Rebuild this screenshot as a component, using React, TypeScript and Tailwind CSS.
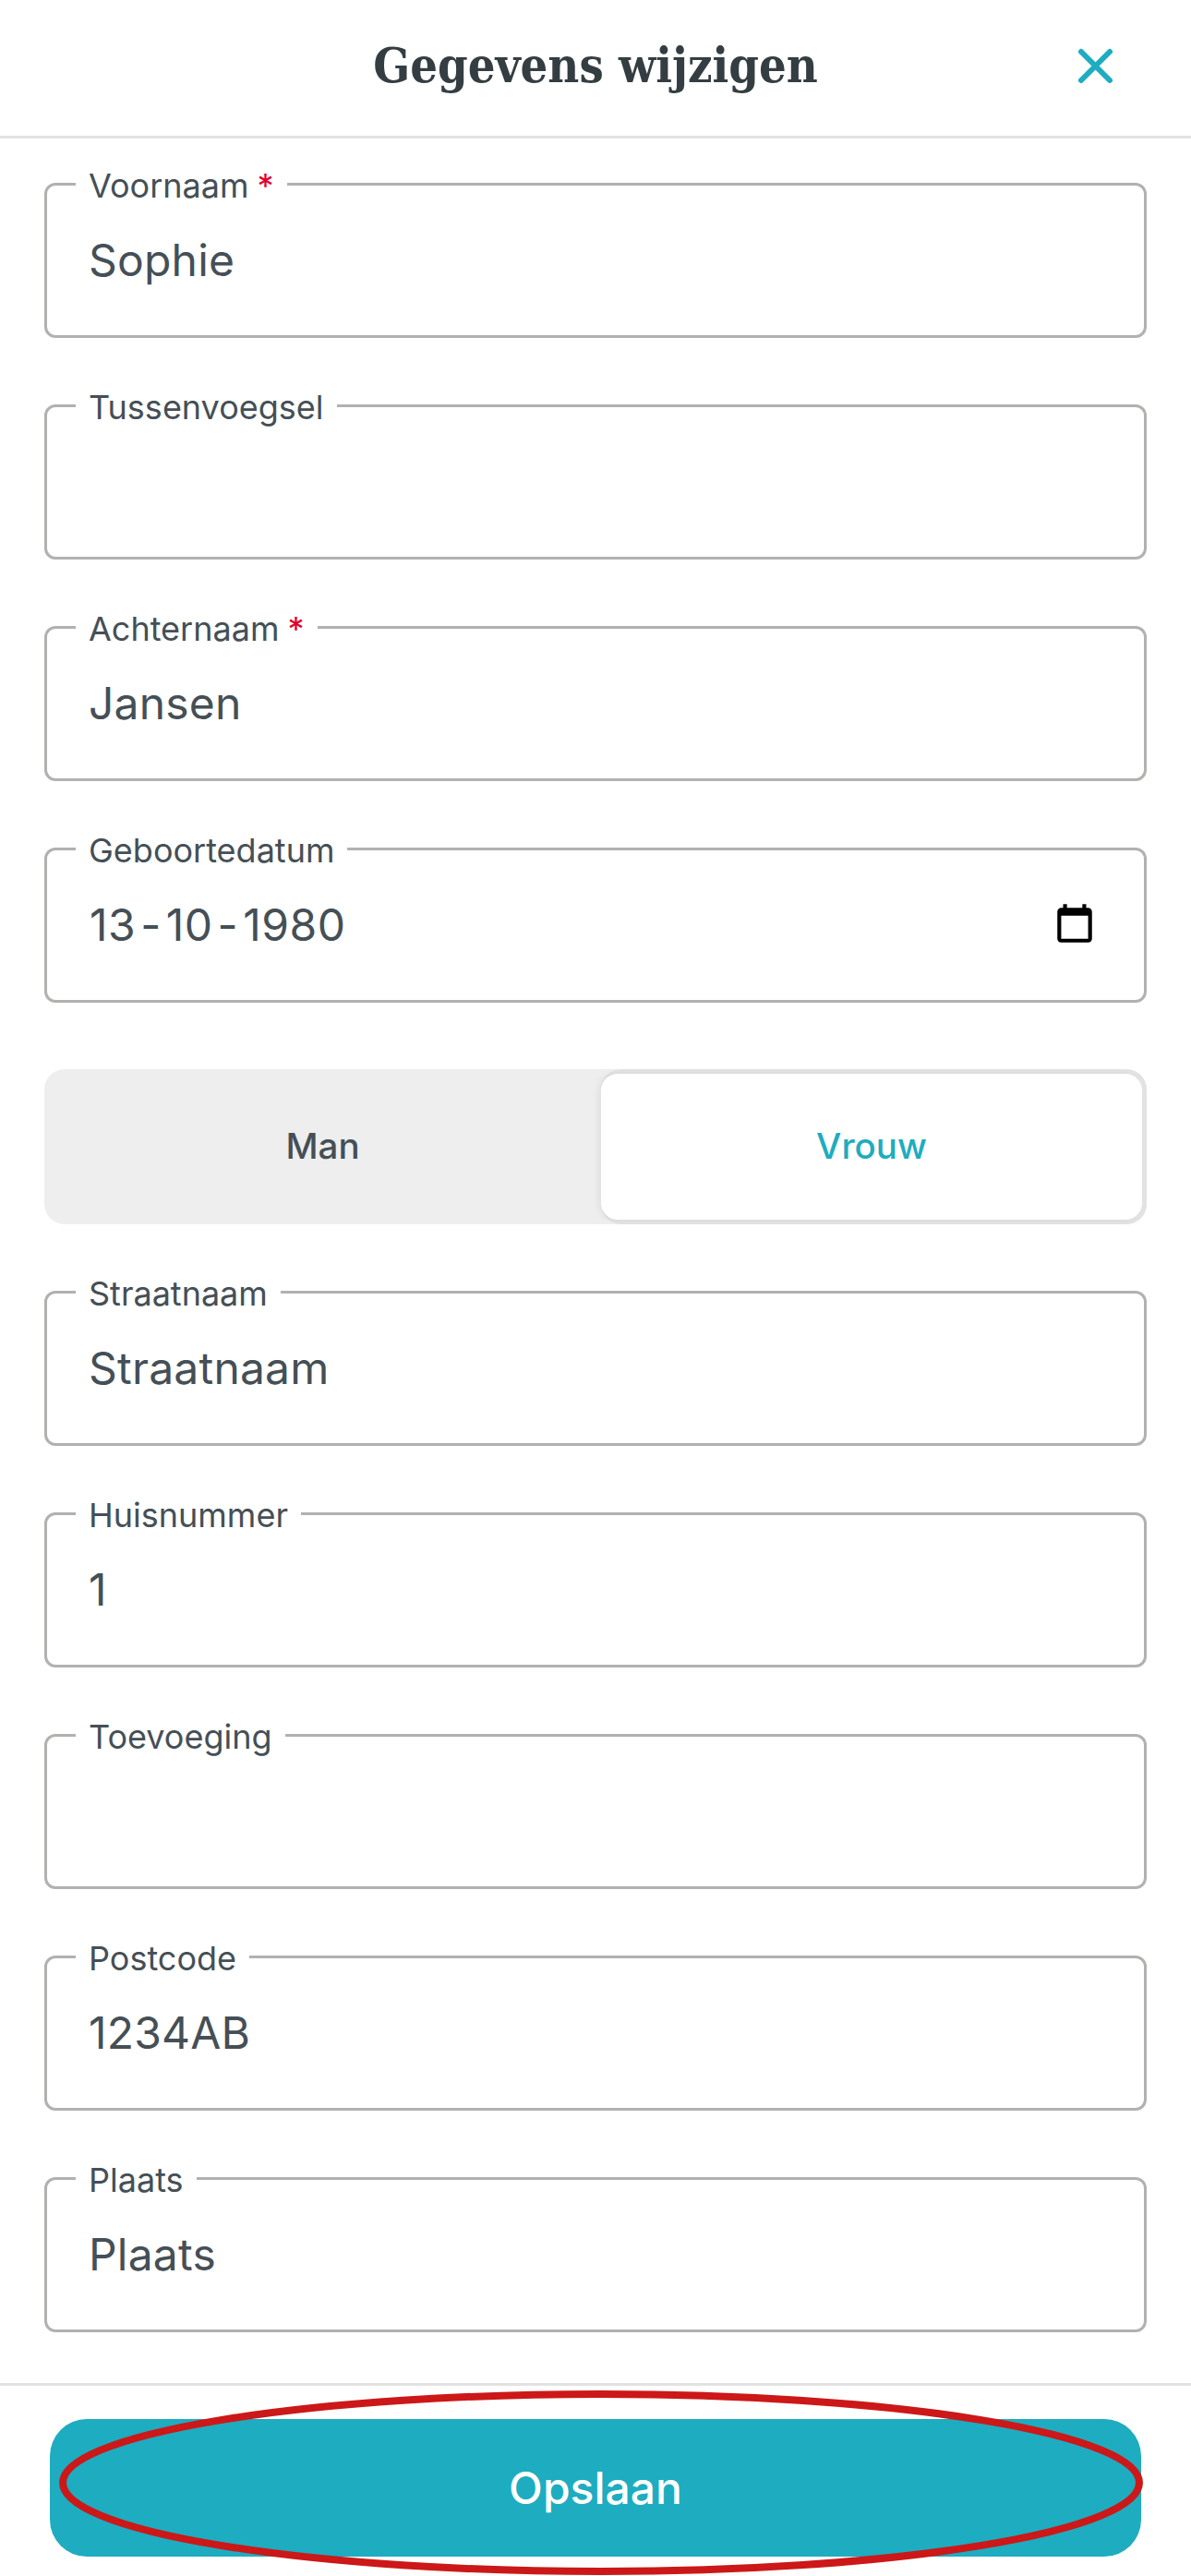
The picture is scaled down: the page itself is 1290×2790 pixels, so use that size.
import type { ReactNode } from 'react';

const inter = { fontFamily: 'Inter, sans-serif' };

function Field({ label, value, required, children }: { label: string; value?: ReactNode; required?: boolean; children?: ReactNode }) {
  return (
    <div className="relative h-[168px] rounded-[12px] border-[3px] border-[#b1b1af] bg-white flex items-center justify-between pl-[45px] pr-[54px]">
      <span className="absolute left-[31px] top-[-20px] bg-white px-[14px] text-[36px] leading-[40px] text-[#454f56]">
        {label}
        {required && <span className="ml-[9px] text-[#e4002b]">*</span>}
      </span>
      <span className="text-[48px] leading-[60px] text-[#454f56] tracking-[0.2px]">{value}</span>
      {children}
    </div>
  );
}

export default function App() {
  return (
    <div className="w-[1290px] h-[2790px] bg-white relative overflow-hidden flex flex-col" style={inter}>
      {/* header */}
      <div className="h-[150px] shrink-0 border-b-[3px] border-[#e2e2e2] flex items-center justify-center relative">
        <h1 className="text-[52px] font-bold text-[#343e42] mt-[-6px] [font-stretch:condensed]" style={{ fontFamily: '"DejaVu Serif Condensed", "DejaVu Serif", serif' }}>
          Gegevens wijzigen
        </h1>
        <svg className="absolute left-[1163px] top-[49px]" width="46" height="46" viewBox="0 0 46 46" fill="none" stroke="#1eacc0" strokeWidth="6" strokeLinecap="round">
          <path d="M8 7 L39 38 M39 7 L8 38" />
        </svg>
      </div>

      <div className="flex flex-col px-[48px] pt-[48px]">
        <div className="flex flex-col gap-[72px]">
          <Field label="Voornaam" value="Sophie" required />
          <Field label="Tussenvoegsel" />
          <Field label="Achternaam" value="Jansen" required />
          <Field
            label="Geboortedatum"
            value={
              <span className="ml-[1px] tracking-[0.5px]">
                13<span className="mx-[5px]">-</span>10<span className="mx-[5px]">-</span>1980
              </span>
            }
          >
            <svg className="mr-[-4px] mt-[-4px]" width="50" height="50" viewBox="0 0 24 24" fill="#000">
              <path d="M19 4h-1V2h-2v2H8V2H6v2H5C3.900 4 3 4.900 3 6v14c0 1.100.9 2 2 2h14c1.100 0 2-.9 2-2V6c0-1.100-.9-2-2-2zm0 16H5V8h14v12z" />
            </svg>
          </Field>

          {/* gender toggle */}
          <div className="h-[168px] rounded-[22px] bg-[#eeeeef] flex">
            <div className="w-[603px] flex items-center justify-center text-[38.5px] font-[450] text-[#454f56]">Man</div>
            <div className="flex-1 rounded-[22px] bg-[#e2e2e2] p-[5px] pl-0">
              <div className="h-full rounded-[18px] bg-white flex items-center justify-center text-[38.5px] font-[450] text-[#1eacc0] shadow-[-4px_0_6px_rgba(0,0,0,0.05)]">
                Vrouw
              </div>
            </div>
          </div>

          <Field label="Straatnaam" value="Straatnaam" />
          <Field label="Huisnummer" value="1" />
          <Field label="Toevoeging" />
          <Field label="Postcode" value="1234AB" />
          <Field label="Plaats" value="Plaats" />
        </div>
      </div>

      {/* footer */}
      <div className="mt-[55px] border-t-[3px] border-[#e2e2e2] px-[54px] pt-[36px]">
        <div className="h-[149px] rounded-[40px] bg-[#1eacc0] flex items-center justify-center text-[48px] font-medium text-white">
          Opslaan
        </div>
      </div>

      {/* red annotation circled over the button */}
      <svg className="absolute left-[60px] top-[2585px]" width="1184" height="205" viewBox="0 0 1184 205" fill="none">
        <ellipse cx="591" cy="104" rx="583" ry="96" stroke="#cc1818" strokeWidth="8" />
      </svg>
    </div>
  );
}
